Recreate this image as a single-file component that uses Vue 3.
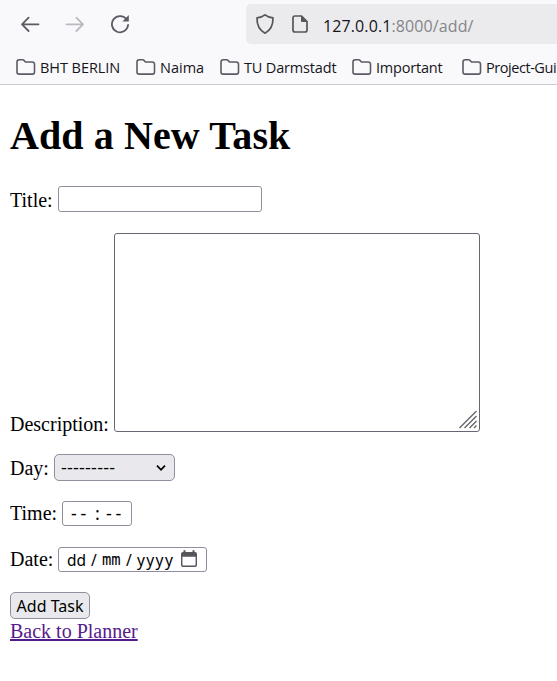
<script setup>
const bookmarks = [
  { name: 'BHT BERLIN', cls: 'b-bht' },
  { name: 'Naima', cls: 'b-naima' },
  { name: 'TU Darmstadt', cls: 'b-tu' },
  { name: 'Important', cls: 'b-imp' },
  { name: 'Project-Gui', cls: 'b-proj' },
]
</script>

<template>
  <div class="window">
    <header class="chrome">
      <div class="toolbar">
        <svg class="nav" width="20" height="20" viewBox="0 0 20 20"><path d="M18.5 10.3H2M8.6 3.6L2 10.3L8.6 17" /></svg>
        <svg class="nav disabled" width="20" height="20" viewBox="0 0 20 20"><path d="M1.5 10.3H18M11.4 3.6L18 10.3L11.4 17" /></svg>
        <svg class="nav" width="20" height="20" viewBox="0 0 20 20">
          <path d="M16.7 5.6A8.1 8.1 0 1 0 18.1 10.8" />
          <path class="solid" d="M18.8 1V7.4H12.4Z" />
        </svg>
        <div class="urlbar">
          <svg class="site" width="20" height="22" viewBox="0 0 20 22"><path d="M10 1.9C12.4 3.9 15 4.5 18 4.8C18.2 11.7 16.3 16.8 10 20.2C3.7 16.8 1.8 11.7 2 4.8C5 4.5 7.6 3.9 10 1.9Z" /></svg>
          <svg class="site page-icon" width="18" height="20" viewBox="0 0 18 20">
            <path d="M10.5 2H4A2 2 0 0 0 2 4V16A2 2 0 0 0 4 18H14A2 2 0 0 0 16 16V7.5Z" />
            <path class="solid" d="M10 1.5L16.5 8H11A1 1 0 0 1 10 7Z" />
          </svg>
          <span class="url"><b>127.0.0.1</b>:8000/add/</span>
        </div>
      </div>
      <nav class="bookmarks">
        <span v-for="b in bookmarks" :key="b.name" class="bookmark" :class="b.cls">
          <svg width="20" height="18" viewBox="0 0 20 18"><path d="M1 4A2.3 2.3 0 0 1 3.3 1.7H6.6Q7.5 1.7 8.1 2.4L9.5 4H16.4A2.1 2.1 0 0 1 18.5 6.1V14A2.1 2.1 0 0 1 16.4 16.1H3.1A2.1 2.1 0 0 1 1 14Z" /></svg>
          <span class="bm-text">{{ b.name }}</span>
        </span>
      </nav>
    </header>

    <main class="page">
      <h1>Add a New Task</h1>
      <div class="row title"><label>Title:</label><div class="field"></div></div>
      <div class="row desc">
        <label>Description:</label>
        <div class="area">
          <svg width="20" height="20" viewBox="0 0 20 20"><path d="M1.5 18L18.5 1M6.5 18L18.5 6M11.5 18L18.5 11M16 18L18.5 15.5" /></svg>
        </div>
      </div>
      <div class="row day">
        <label>Day:</label>
        <div class="select">
          <span>---------</span>
          <svg width="12" height="8" viewBox="0 0 12 8"><path d="M2 1.7L6 5.8L10 1.7" /></svg>
        </div>
      </div>
      <div class="row time"><label>Time:</label><div class="field parts"><span class="dash">--</span><span class="colon">:</span><span class="dash">--</span></div></div>
      <div class="row date">
        <label>Date:</label>
        <div class="field parts">
          <span class="dd">dd</span><span class="slash">/</span><span class="mm">mm</span><span class="slash">/</span><span class="yy">yyyy</span>
          <svg width="18" height="18" viewBox="0 0 18 18">
            <path d="M3 2H15A2 2 0 0 1 17 4V15A2 2 0 0 1 15 17H3A2 2 0 0 1 1 15V4A2 2 0 0 1 3 2ZM2.4 6.8V14.6A1 1 0 0 0 3.4 15.6H14.6A1 1 0 0 0 15.6 14.6V6.8Z" fill-rule="evenodd" />
            <path d="M3.5 .3H5.5V3H3.5ZM12.5 .3H14.5V3H12.5Z" />
          </svg>
        </div>
      </div>
      <button type="button">Add Task</button>
      <a href="#">Back to Planner</a>
    </main>
  </div>
</template>

<style>
body { margin: 0; background: #fff; }
</style>

<style scoped>
* { box-sizing: border-box; }
.window { width: 557px; height: 681px; overflow: hidden; }
svg { display: block; flex: none; fill: none; }
.chrome { height: 85px; background: #f9f9fb; border-bottom: 1px solid #ccccd0; font-family: "Open Sans", sans-serif; overflow: hidden; }
.toolbar { height: 48px; display: flex; align-items: center; padding-left: 20px; gap: 25px; }
.nav { stroke: #5b5b66; stroke-width: 1.8; stroke-linecap: round; stroke-linejoin: round; }
.nav .solid { fill: #5b5b66; stroke: none; }
.nav.disabled { stroke: #b9b9c1; }
.urlbar { flex: none; width: 330px; height: 40px; margin-left: 91px; background: #ebebed; border-radius: 5px; display: flex; align-items: center; padding-left: 9px; }
.site { stroke: #55555c; stroke-width: 1.7; stroke-linejoin: round; }
.site .solid { fill: #55555c; stroke: none; }
.page-icon { margin-left: 16px; }
.url { margin-left: 14px; margin-top: 3px; font-size: 16px; letter-spacing: .11px; color: #858589; white-space: nowrap; }
.url b { font-weight: 400; color: #15141a; }
.bookmarks { display: flex; height: 37px; padding: 0 0 0 16px; }
.bookmark { flex: none; display: flex; align-items: center; height: 38px; color: #15141a; font-size: 14.5px; white-space: nowrap; }
.bookmark svg { stroke: #5b5b66; stroke-width: 1.6; margin-right: 4px; }
.bm-text { margin-top: 1px; }
.b-bht { width: 120px; letter-spacing: -.05px; }
.b-naima { width: 84px; }
.b-tu { width: 132px; letter-spacing: -.17px; }
.b-imp { width: 110px; letter-spacing: -.2px; }
.b-proj { letter-spacing: -.45px; }
.page { padding: 0 10px; display: flex; flex-direction: column; align-items: flex-start; font-family: "Liberation Serif", serif; font-size: 20px; color: #000; }
h1 { margin: 28px 0 27px; font-size: 40px; line-height: 46px; font-weight: 700; white-space: nowrap; letter-spacing: .1px; }
.row { display: flex; }
.row label { line-height: 24px; white-space: nowrap; flex: none; }
.field { height: 26px; border: 1px solid #8f8f9d; border-radius: 3px; background: #fff; }
.title { height: 26px; margin-bottom: 21px; }
.title label { width: 48px; padding-top: 2px; }
.title .field { width: 204px; }
.desc { height: 199px; margin-bottom: 22px; align-items: flex-end; }
.desc label { width: 104px; margin-bottom: -4px; }
.area { width: 366px; height: 199px; border: 1px solid #676774; border-radius: 3px; display: flex; align-items: flex-end; justify-content: flex-end; padding: 0 1px 1px 0; }
.area svg { stroke: #66666b; stroke-width: 1.4; }
.day { height: 27px; margin-bottom: 20px; }
.day label { width: 44px; padding-top: 2px; }
.select { width: 121px; height: 27px; background: #e9e9ed; border: 1px solid #8f8f9d; border-radius: 5px; display: flex; align-items: center; justify-content: space-between; padding: 0 7px 0 6px; font: 18px "Open Sans", sans-serif; letter-spacing: .23px; }
.select span { margin-top: -1px; }
.select svg { stroke: #000; stroke-width: 1.8; }
.time { height: 25px; margin-bottom: 21px; }
.time label { width: 52px; }
.time .field { width: 70px; height: 25px; padding-left: 8px; }
.parts { display: flex; align-items: center; font: 16px "Noto Sans", sans-serif; }
.dash { width: 20px; font-size: 18px; letter-spacing: 3.6px; margin-top: -1px; }
.colon { width: 15px; padding-left: 4px; font-size: 18px; margin-top: -1px; }
.date { height: 25px; margin-bottom: 20px; }
.date label { width: 48px; }
.date .field { width: 149px; height: 25px; padding-left: 8px; font-size: 15.5px; }
.parts span { flex: none; white-space: nowrap; }
.dd { width: 24px; }
.slash { width: 11px; }
.mm { width: 24px; font: 15.5px "DejaVu Sans Mono", monospace; margin-top: 1px; }
.yy { width: 45px; letter-spacing: 1.4px; }
.parts svg { fill: #55555a; margin-left: -2px; margin-top: -2px; }
button { width: 80px; height: 27px; padding: 0; border: 1px solid #8f8f9d; border-radius: 5px; background: #e9e9ed; color: #000; font: 16px "Noto Sans", sans-serif; white-space: nowrap; letter-spacing: 0; }
a { color: #551a8b; line-height: 24px; text-decoration: underline; }
</style>
